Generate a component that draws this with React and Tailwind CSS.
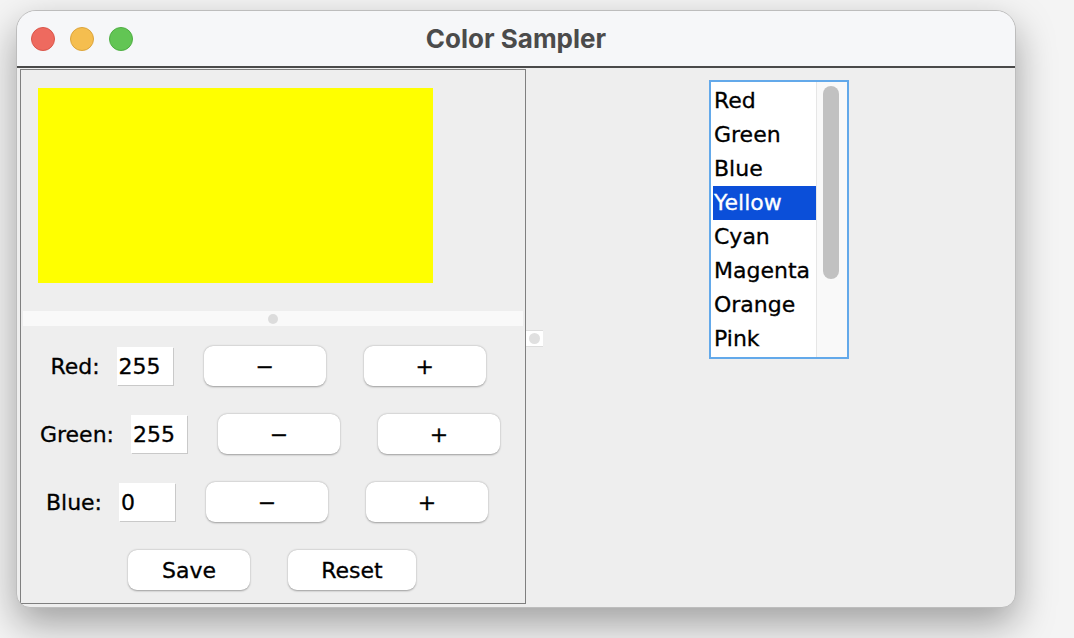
import React from 'react';

// Java Swing "Color Sampler" window on a macOS-style desktop.
const COLORS = ['Red', 'Green', 'Blue', 'Yellow', 'Cyan', 'Magenta', 'Orange', 'Pink'];

const SWING_FONT = { fontFamily: '"DejaVu Sans", "Noto Sans", sans-serif' };

function SwingButton({ children, className = '' }) {
  return (
    <div
      className={`flex h-[40px] items-center justify-center rounded-[9px] bg-white text-[22px] text-black shadow-[0_0.5px_2px_rgba(0,0,0,0.35)] ${className}`}
    >
      {children}
    </div>
  );
}

function ChannelRow({ label, value, shift }) {
  return (
    <div className={`flex h-[40px] items-center justify-center ${shift}`}>
      <span className="text-[22px] text-black">{label}</span>
      <div className="ml-[17px] flex h-[38px] w-[56px] items-center bg-white pl-[2px] text-[22px] text-black shadow-[1px_1px_0_#c9c9c9]">
        {value}
      </div>
      <SwingButton className="ml-[31px] w-[122px]">−</SwingButton>
      <SwingButton className="ml-[38px] w-[122px]">+</SwingButton>
    </div>
  );
}

export default function App() {
  return (
    <div className="min-h-screen w-full bg-[#f4f4f4] pl-[16px] pt-[10px]" style={SWING_FONT}>
      <div className="flex h-[598px] w-[1000px] flex-col overflow-hidden rounded-t-[20px] rounded-b-[14px] border border-[#bdbdbd] bg-[#eeeeee] shadow-[0_16px_38px_rgba(0,0,0,0.35)] [-webkit-text-stroke:0.3px_black]">
        {/* Title bar */}
        <div className="relative flex h-[57px] shrink-0 items-center border-b-2 border-[#4a4a4a] bg-[#f6f7f9] pl-[14px]">
          <div className="flex gap-[15px]">
            <span className="h-[24px] w-[24px] rounded-full border border-[#d9564b] bg-[#ee6a5f]" />
            <span className="h-[24px] w-[24px] rounded-full border border-[#dba43c] bg-[#f5be4f]" />
            <span className="h-[24px] w-[24px] rounded-full border border-[#4fae44] bg-[#62c554]" />
          </div>
          <div
            className="absolute inset-0 flex items-center justify-center text-[26px] font-bold text-[#4b4b4b] [-webkit-text-stroke:0px]"
            style={{ fontFamily: 'Inter, "Liberation Sans", sans-serif' }}
          >
            Color Sampler
          </div>
        </div>

        {/* Body */}
        <div className="flex flex-1 pt-[1px]">
          {/* Left split pane */}
          <div className="ml-[3px] flex h-[535px] w-[506px] flex-col border border-[#7f7f7f]">
            <div className="h-[241px] pl-[17px] pt-[18px]">
              <div className="h-[195px] w-[395px] bg-[#ffff00]" />
            </div>
            <div className="mx-[2px] flex h-[15px] items-center justify-center bg-[#f9f9f9]">
              <span className="h-[10px] w-[10px] rounded-full bg-[#dcdcdc]" />
            </div>
            <div className="flex flex-col gap-[28px] pt-[20px]">
              <ChannelRow label="Red:" value="255" shift="pr-[10px]" />
              <ChannelRow label="Green:" value="255" shift="pr-[6px]" />
              <ChannelRow label="Blue:" value="0" shift="pr-[12px]" />
              <div className="flex justify-center gap-[38px] pr-[2px]">
                <SwingButton className="w-[122px]">Save</SwingButton>
                <SwingButton className="w-[128px]">Reset</SwingButton>
              </div>
            </div>
          </div>

          {/* Divider handle */}
          <div className="w-[17px] pt-[261px]">
            <div className="flex h-[17px] w-[17px] items-center justify-center border-y border-[#dddddd] bg-white">
              <span className="h-[11px] w-[11px] rounded-full bg-[#e0e0e0]" />
            </div>
          </div>

          {/* Right pane with list */}
          <div className="flex flex-1 justify-center pt-[11px]">
            <div className="flex h-[279px] w-[140px] border-2 border-[#63a9ea] bg-white">
              <div className="flex-1 pl-[2px] pt-[2px]">
                {COLORS.map((c) => (
                  <div
                    key={c}
                    className={`h-[34px] pl-[1px] text-[22px] leading-[34px] ${
                      c === 'Yellow' ? 'bg-[#0b4fd9] text-white [-webkit-text-stroke:0.3px_white]' : 'text-black'
                    }`}
                  >
                    {c}
                  </div>
                ))}
              </div>
              <div className="w-[31px] border-l border-[#e6e6e6] bg-[#f9f9f9] pl-[6px] pt-[4px]">
                <div className="h-[193px] w-[16px] rounded-full bg-[#c1c1c1]" />
              </div>
            </div>
          </div>
        </div>
      </div>
    </div>
  );
}
